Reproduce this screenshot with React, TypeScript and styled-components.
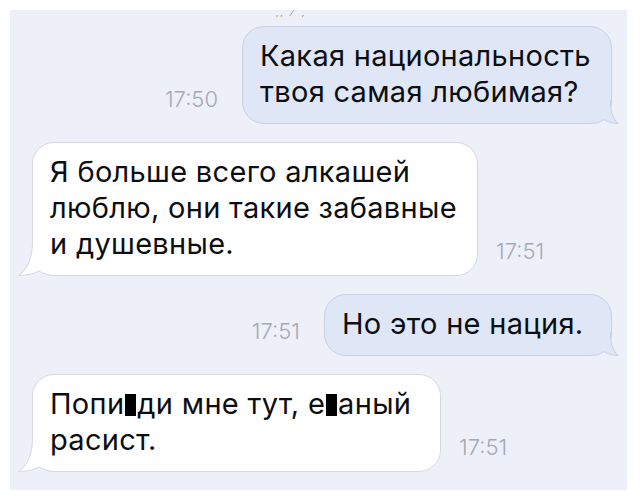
import styled, { createGlobalStyle } from 'styled-components';

const GlobalStyle = createGlobalStyle`
  html, body {
    margin: 0;
    padding: 0;
    background: #ffffff;
  }

  body {
    font-family: Inter, 'Liberation Sans', 'Noto Sans', sans-serif;
    -webkit-font-smoothing: antialiased;
  }
`;

const Page = styled.div`
  padding: 10px 13px 14px 10px;
`;

const Panel = styled.div`
  position: relative;
  height: 480px;
  box-sizing: border-box;
  padding: 16px 15px 0 22px;
  background: #eef0f9;
  display: flex;
  flex-direction: column;
  gap: 18px;
`;

// leftovers of the cropped line above the first message
const Marks = styled.div`
  position: absolute;
  top: 0;
  left: 266px;
  display: flex;
  gap: 9px;
  font-size: 8px;
  line-height: 6px;
  color: #74777e;
`;

const Row = styled.div<{ $out: boolean }>`
  display: flex;
  align-items: flex-end;
  justify-content: ${(p) => (p.$out ? 'flex-end' : 'flex-start')};
  gap: ${(p) => (p.$out ? '24px' : '18px')};
`;

const Time = styled.div`
  font-size: 22px;
  font-weight: 300;
  line-height: 22px;
  color: #a6a9b1;
  margin-bottom: 14px;
`;

const Bubble = styled.div<{ $out: boolean; $width: number }>`
  position: relative;
  box-sizing: border-box;
  width: ${(p) => p.$width}px;
  padding: 11px 20px 13px 17px;
  border-radius: 22px;
  background: ${(p) => (p.$out ? '#dfe6f6' : '#ffffff')};
  border: 1px solid ${(p) => (p.$out ? '#c8d0e2' : '#d6d9e3')};
`;

const TailSvg = styled.svg<{ $out: boolean }>`
  position: absolute;
  bottom: -1px;
  ${(p) => (p.$out ? 'right: -8px;' : 'left: -15px;')}
  display: block;
`;

const Text = styled.div`
  position: relative;
  font-size: 29px;
  line-height: 36px;
  letter-spacing: 0.3px;
  color: #0d0e12;
  white-space: nowrap;
`;

const Censor = styled.span`
  display: inline-block;
  width: 11px;
  height: 22px;
  margin: 0 1px;
  vertical-align: -2px;
  background: #000000;
`;

interface IMessage {
  out: boolean;
  width: number;
  time: string;
  lines: React.ReactNode[];
}

const messages: IMessage[] = [
  { out: true, width: 370, time: '17:50', lines: ['Какая национальность', 'твоя самая любимая?'] },
  {
    out: false,
    width: 446,
    time: '17:51',
    lines: ['Я больше всего алкашей', 'люблю, они такие забавные', 'и душевные.'],
  },
  { out: true, width: 288, time: '17:51', lines: ['Но это не нация.'] },
  {
    out: false,
    width: 409,
    time: '17:51',
    lines: [
      <>
        Попи<Censor />ди мне тут, е<Censor />аный
      </>,
      'расист.',
    ],
  },
];

// tails are drawn in svg so the hook can curve like the iOS one
const OutTail = () => (
  <TailSvg $out width="24" height="24" viewBox="0 0 24 24">
    <path
      d="M0 0 L15.5 0 C15.5 11 17.5 19 23.5 23.5 C18 23.5 13 22 9 19.5 C6 21.5 3 23 0 23.5 Z"
      fill="#dfe6f6"
    />
    <path
      d="M15.5 0 C15.5 11 17.5 19 23.5 23.5 C18 23.5 13 22 9 19.5 C6 21.5 3 23 0 23.5"
      fill="none"
      stroke="#c8d0e2"
      strokeWidth="1"
    />
  </TailSvg>
);

const InTail = () => (
  <TailSvg $out={false} width="36" height="34" viewBox="0 0 36 34">
    <path
      d="M14.5 0 L36 0 L36 33.5 C30 33 25 31.5 21 29 C15 32 8 33.5 0.5 33.5 C9 28 14.5 17 14.5 0 Z"
      fill="#ffffff"
    />
    <path
      d="M14.5 0 C14.5 17 9 28 0.5 33.5 C8 33.5 15 32 21 29 C25 31.5 30 33 36 33.5"
      fill="none"
      stroke="#d6d9e3"
      strokeWidth="1"
    />
  </TailSvg>
);

const App = () => {
  return (
    <>
      <GlobalStyle />
      <Page>
        <Panel>
          <Marks>
            <span>‚ ‚</span>
            <span>⁄</span>
            <span>‚</span>
          </Marks>
          {messages.map((m, i) => (
            <Row key={i} $out={m.out}>
              {m.out && <Time>{m.time}</Time>}
              <Bubble $out={m.out} $width={m.width}>
                {m.out ? <OutTail /> : <InTail />}
                <Text>
                  {m.lines.map((l, j) => (
                    <div key={j}>{l}</div>
                  ))}
                </Text>
              </Bubble>
              {!m.out && <Time>{m.time}</Time>}
            </Row>
          ))}
        </Panel>
      </Page>
    </>
  );
};

export default App;
